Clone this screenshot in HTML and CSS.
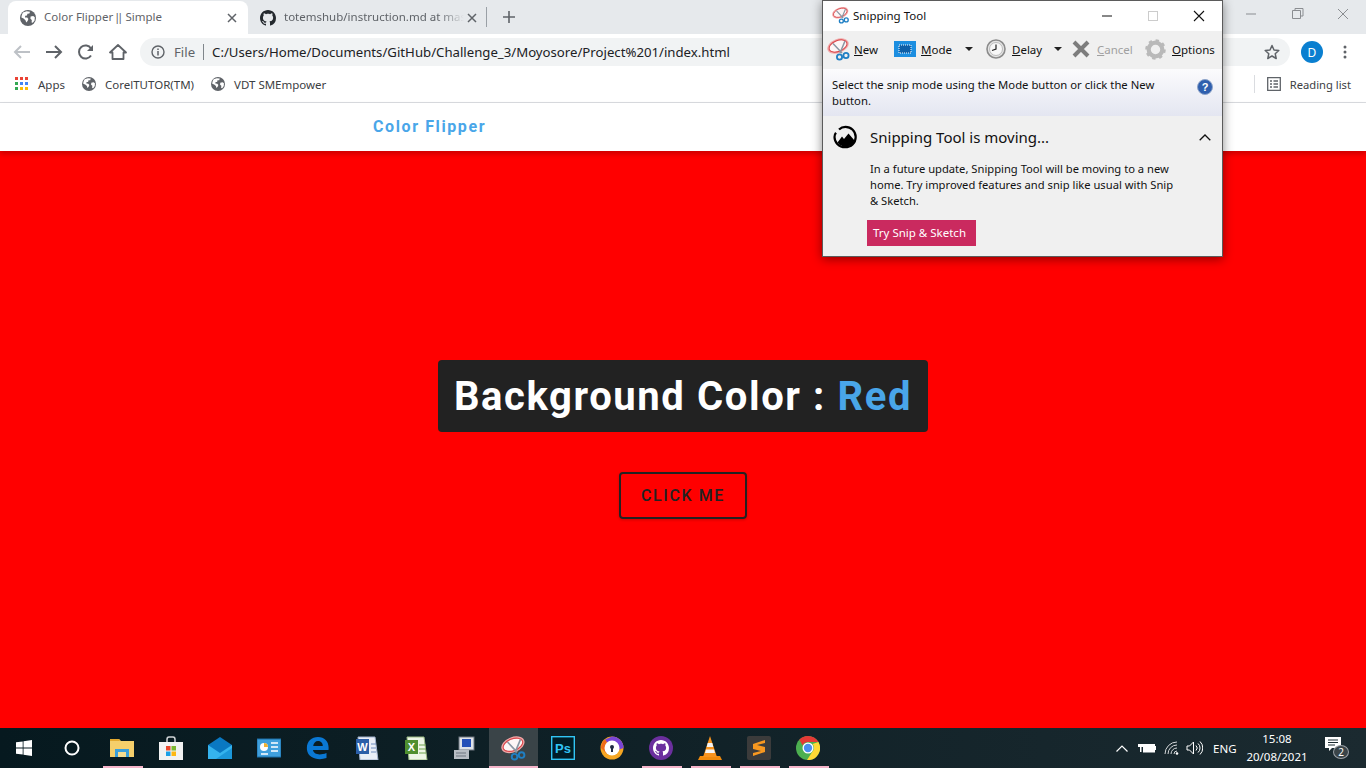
FILE: index.html
```html
<!DOCTYPE html>
<html lang="en">
<head>
  <meta charset="UTF-8" />
  <meta name="viewport" content="width=device-width, initial-scale=1" />
  <title>Color Flipper || Simple</title>
  <link rel="stylesheet" href="styles.css">
</head>
<body>
  <svg class="defs" width="0" height="0">
    <symbol id="globe" viewBox="0 0 16 16">
      <circle cx="8" cy="8" r="8" fill="#5f6368"/>
      <path fill="#fff" d="M3 2.600 6.600 1.300 10 1.800 9.400 3.600 7.400 3.800 7 5.600 5.200 5.800 5 7.400 7.200 7.600 8.400 9 7.600 11 6.200 12.600 5.600 10.400 3.600 8.600 1.400 7.600C1.600 5.600 2.200 3.800 3 2.600ZM10.600 6.600 13.200 6 14.800 7.200 14.600 10.400 12.800 12.800 11.600 12.600 11.800 10 10.400 8.800Z"/>
    </symbol>
    <symbol id="octocat" viewBox="0 0 16 16">
      <path d="M8 0C3.580 0 0 3.580 0 8c0 3.540 2.290 6.530 5.470 7.590.4.070.55-.17.55-.38 0-.19-.01-.82-.01-1.490-2.010.37-2.530-.49-2.690-.94-.09-.23-.48-.94-.82-1.130-.28-.15-.68-.52-.01-.53.63-.01 1.080.58 1.230.82.720 1.210 1.870.87 2.330.66.070-.52.280-.87.510-1.070-1.780-.2-3.640-.89-3.640-3.950 0-.87.310-1.590.82-2.150-.08-.2-.36-1.020.08-2.120 0 0 .67-.21 2.200.82.640-.18 1.320-.27 2-.27.68 0 1.360.09 2 .27 1.530-1.040 2.200-.82 2.200-.82.44 1.100.16 1.920.08 2.120.51.560.82 1.270.82 2.150 0 3.070-1.870 3.750-3.650 3.950.29.250.54.730.54 1.480 0 1.070-.01 1.930-.01 2.200 0 .21.150.46.550.38A8.013 8.013 0 0016 8c0-4.420-3.580-8-8-8z"/>
    </symbol>
    <symbol id="scissors" viewBox="0 0 24 24">
      <ellipse cx="11" cy="9" rx="10.200" ry="6" transform="rotate(-22 11 9)" fill="#fdf6f6" stroke="#f0a9a9" stroke-width="2"/>
      <ellipse cx="11" cy="9" rx="9.500" ry="5.400" transform="rotate(-22 11 9)" fill="none" stroke="#d9474c" stroke-width="1"/>
      <path d="M6 6.500 15 16M18 4 13 16" stroke="#8a96a3" stroke-width="1.500" fill="none"/>
      <circle cx="12.500" cy="20" r="2.600" fill="none" stroke="#1f7fc4" stroke-width="1.800"/>
      <circle cx="19" cy="18.500" r="2.600" fill="none" stroke="#1f7fc4" stroke-width="1.800"/>
    </symbol>
  </svg>

  <header class="browser">
    <div class="tabstrip">
      <div class="tab active">
        <svg class="ico16" aria-hidden="true"><use href="#globe"/></svg>
        <span class="tab-title">Color Flipper <span class="bars">||</span> Simple</span>
        <svg class="tab-x" viewBox="0 0 10 10"><path d="M1 1 9 9M9 1 1 9" stroke="#5f6368" stroke-width="1.500"/></svg>
      </div>
      <div class="tab">
        <svg class="ico16" fill="#24292e" aria-hidden="true"><use href="#octocat"/></svg>
        <span class="tab-title fade">totemshub/instruction.md at mas</span>
        <svg class="tab-x" viewBox="0 0 10 10"><path d="M1 1 9 9M9 1 1 9" stroke="#5f6368" stroke-width="1.500"/></svg>
      </div>
      <span class="tab-sep"></span>
      <svg class="tab-new" viewBox="0 0 12 12"><path d="M6 0V12M0 6H12" stroke="#5f6368" stroke-width="1.600"/></svg>
      <div class="win-controls">
        <svg viewBox="0 0 46 14"><path d="M18 7H28" stroke="#8a8d91"/></svg>
        <svg viewBox="0 0 46 14"><path d="M18.500 3.500H26.500V11.500H18.500ZM21 3.500V1.500H29V9H26.500" stroke="#8a8d91" fill="none"/></svg>
        <svg viewBox="0 0 46 14"><path d="M18 2 28 12M28 2 18 12" stroke="#8a8d91"/></svg>
      </div>
    </div>

    <div class="toolbar">
      <svg class="nav-btn" viewBox="0 0 32 16"><path d="M24 8H9M15 2 9 8 15 14" fill="none" stroke="#bdc1c6" stroke-width="2"/></svg>
      <svg class="nav-btn" viewBox="0 0 32 16"><path d="M8 8H23M17 2 23 8 17 14" fill="none" stroke="#5f6368" stroke-width="2"/></svg>
      <svg class="nav-btn" viewBox="0 0 32 16"><path d="M21 11.500A6.500 6.500 0 1 1 21 4.500" fill="none" stroke="#5f6368" stroke-width="2"/><path d="M23 1V7H17Z" fill="#5f6368"/></svg>
      <svg class="nav-btn" viewBox="0 0 32 16"><path d="M16 1 8 8.500H10.500V15H21.500V8.500H24Z" fill="none" stroke="#5f6368" stroke-width="1.800" stroke-linejoin="round"/></svg>
      <div class="omnibox">
        <svg class="ico14" viewBox="0 0 14 14"><circle cx="7" cy="7" r="6" fill="none" stroke="#5f6368" stroke-width="1.400"/><path d="M7 6V10.500M7 3.500V5" stroke="#5f6368" stroke-width="1.500"/></svg>
        <span class="omni-scheme">File</span>
        <span class="omni-sep"></span>
        <span class="omni-url">C:/Users/Home/Documents/GitHub/Challenge_3/Moyosore/Project%201/index.html</span>
        <svg class="omni-star" viewBox="0 0 16 16"><path d="M8 1.500 10 6 14.800 6.500 11.200 9.700 12.200 14.500 8 12 3.800 14.500 4.800 9.700 1.200 6.500 6 6Z" fill="none" stroke="#5f6368" stroke-width="1.500" stroke-linejoin="round"/></svg>
      </div>
      <span class="avatar">D</span>
      <svg class="kebab" viewBox="0 0 4 14"><circle cx="2" cy="2" r="1.500"/><circle cx="2" cy="7" r="1.500"/><circle cx="2" cy="12" r="1.500"/></svg>
    </div>

    <div class="bookmarks">
      <a class="bookmark">
        <svg class="ico14" viewBox="0 0 14 14">
          <rect width="3" height="3" fill="#ea4335"/><rect x="5" width="3" height="3" fill="#ea4335"/><rect x="10" width="3" height="3" fill="#ea4335"/>
          <rect y="5" width="3" height="3" fill="#34a853"/><rect x="5" y="5" width="3" height="3" fill="#4285f4"/><rect x="10" y="5" width="3" height="3" fill="#4285f4"/>
          <rect y="10" width="3" height="3" fill="#34a853"/><rect x="5" y="10" width="3" height="3" fill="#fbbc05"/><rect x="10" y="10" width="3" height="3" fill="#fbbc05"/>
        </svg>
        Apps
      </a>
      <a class="bookmark"><svg class="ico14" aria-hidden="true"><use href="#globe"/></svg>CorelTUTOR(TM)</a>
      <a class="bookmark"><svg class="ico14" aria-hidden="true"><use href="#globe"/></svg>VDT SMEmpower</a>
      <div class="reading">
        <svg class="ico14" viewBox="0 0 14 14"><path d="M.7.700H13.300V13.300H.7ZM3 4H5M6.500 4H11M3 7H5M6.500 7H11M3 10H5M6.500 10H11" fill="none" stroke="#5f6368" stroke-width="1.300"/></svg>
        Reading list
      </div>
    </div>
  </header>

  <nav class="site-nav">
    <h4>Color Flipper</h4>
  </nav>

  <main class="hero">
    <h2 class="bg-label">Background Color : <span class="color-name">Red</span></h2>
    <button class="btn-flip">Click me</button>
  </main>

  <footer class="taskbar">
    <div class="start">
      <svg viewBox="0 0 16 16" width="16" height="16"><path fill="#fff" d="M0 2.300 6.700 1.400V7.600H0ZM7.500 1.300 16 0V7.600H7.500ZM0 8.400H6.700V14.600L0 13.700ZM7.500 8.400H16V16L7.500 14.700Z"/></svg>
    </div>
    <div class="start cortana">
      <svg viewBox="0 0 16 16" width="16" height="16"><circle cx="8" cy="8" r="6.500" fill="none" stroke="#fff" stroke-width="2"/></svg>
    </div>
    <div class="task-item open">
      <svg viewBox="0 0 24 24"><path d="M0 3H9L11 5H24V21H0Z" fill="#f5cf6b"/><path d="M0 3H9L10 5H0Z" fill="#e3a92f"/><path d="M5 13H19V21H16V16H8V21H5Z" fill="#3a9fdb"/><rect x="8" y="16" width="8" height="5" fill="#f5dc91"/></svg>
    </div>
    <div class="task-item">
      <svg viewBox="0 0 24 24"><path d="M8 7V3.500C8 2 9 1 10 1H14C15 1 16 2 16 3.500V7" fill="none" stroke="#cfd3d6" stroke-width="1.500"/><rect y="6" width="24" height="18" fill="#f2f2f2"/><rect x="7" y="10" width="4.500" height="4.500" fill="#e8462b"/><rect x="12.500" y="10" width="4.500" height="4.500" fill="#7cb82f"/><rect x="7" y="15.500" width="4.500" height="4.500" fill="#1c9fe6"/><rect x="12.500" y="15.500" width="4.500" height="4.500" fill="#fdb813"/></svg>
    </div>
    <div class="task-item">
      <svg viewBox="0 0 24 24"><path d="M0 9 12 1 24 9V23H0Z" fill="#0a78c2"/><path d="M0 9 12 17 24 9V23H0Z" fill="#35b3ee"/><path d="M24 23H8L24 12Z" fill="#1b97da"/></svg>
    </div>
    <div class="task-item">
      <svg viewBox="0 0 24 24"><rect y="3" width="24" height="18" fill="#3f9fdc" stroke="#1b6ea8"/><circle cx="7" cy="11" r="4" fill="#fff"/><path d="M7 11V7A4 4 0 0 1 11 11Z" fill="#f2b233"/><path d="M14 7H21M14 11H21M14 15H21M4 18H11" stroke="#fff" stroke-width="1.500"/></svg>
    </div>
    <div class="task-item">
      <svg viewBox="0 0 24 24"><path d="M22.500 14H7C7.500 18 13 20 20.500 17V22C12 25 2 22 1 14 0 6 5 1 12 1 19 1 23.500 6 22.500 14ZM16.800 10C16.800 6.500 14.500 5 12 5 9.500 5 7.500 7 7.200 10Z" fill="#0a78d4"/></svg>
    </div>
    <div class="task-item">
      <svg viewBox="0 0 24 24"><path d="M3 1H20L23 24H5Z" fill="#e9eef7" stroke="#9fb0cc"/><rect x="1" y="3" width="13" height="15" fill="#2b5ea8"/><text class="office-letter" x="7.500" y="15">W</text><path d="M16 8H21M16 12H21M16 16H21" stroke="#6f8dbf"/></svg>
    </div>
    <div class="task-item">
      <svg viewBox="0 0 24 24"><path d="M3 1H20L23 24H5Z" fill="#edf5e6" stroke="#9dbb84"/><rect x="1" y="4" width="13" height="14" fill="#4f8f2f"/><text class="office-letter" x="7.500" y="15">X</text><path d="M15 9H22M15 13H22M15 17H22" stroke="#6fa34f"/></svg>
    </div>
    <div class="task-item">
      <svg viewBox="0 0 24 24"><rect x="6" y="1" width="15" height="13" fill="#dfe3e8" stroke="#6e7780"/><rect x="9" y="3" width="9" height="8" fill="#2450b8"/><path d="M1 14H16V23H1Z" fill="#b8bec4"/><path d="M3 17H13M3 20H13" stroke="#6e7780"/></svg>
    </div>
    <div class="task-item open current">
      <svg class="snip-big" aria-hidden="true"><use href="#scissors"/></svg>
    </div>
    <div class="task-item">
      <svg viewBox="0 0 24 24"><rect x=".7" y=".7" width="22.600" height="22.600" fill="#001d26" stroke="#31c5f4" stroke-width="1.400"/><text class="ps-letter" x="4" y="17">Ps</text></svg>
    </div>
    <div class="task-item">
      <svg viewBox="0 0 24 24"><circle cx="12" cy="12" r="11.500" fill="#f5a623"/><path d="M12 .5A11.500 11.500 0 0 1 23.500 12L12 16 5 3.500Z" fill="#7a45d6"/><path d="M1 12A11.500 11.500 0 0 1 5 3.500L9 9 7 18Z" fill="#ef6c1a"/><circle cx="12" cy="12" r="7.500" fill="#fff"/><circle cx="12" cy="11" r="2" fill="#1f2a44"/><rect x="11" y="11" width="2" height="5" fill="#1f2a44"/></svg>
    </div>
    <div class="task-item open">
      <svg viewBox="0 0 24 24"><circle cx="12" cy="12" r="12" fill="#6b2f9e"/><svg x="4" y="4" width="16" height="16" fill="#fff"><use href="#octocat"/></svg></svg>
    </div>
    <div class="task-item open">
      <svg viewBox="0 0 24 24"><path d="M2 20H22L24 24H0Z" fill="#f08a0c"/><path d="M12 0 19 21H5Z" fill="#f7931e"/><path d="M9.700 7H14.300L15.300 11H8.700ZM8 13.500H16L17 17H7Z" fill="#f4f4f4"/></svg>
    </div>
    <div class="task-item open">
      <svg viewBox="0 0 24 24"><rect width="24" height="24" rx="2" fill="#3b3b3b"/><path d="M18 4 6 8V13L14 15 6 17V20L18 16V11L10 9 18 7Z" fill="#f89820"/></svg>
    </div>
    <div class="task-item open">
      <svg viewBox="0 0 24 24"><circle cx="12" cy="12" r="12" fill="#4caf50"/><path d="M12 0A12 12 0 0 1 22.400 6H12C9.500 6 7.500 7.500 6.700 9.500L3.300 3.700A12 12 0 0 1 12 0Z" fill="#e53935"/><path d="M22.400 6A12 12 0 0 1 11 24L16.500 15.500A5.500 5.500 0 0 0 16.500 8Z" fill="#fdd835"/><circle cx="12" cy="12" r="5.500" fill="#fff"/><circle cx="12" cy="12" r="4.200" fill="#4a8ef0"/></svg>
    </div>

    <div class="tray">
      <svg class="tray-chevron" viewBox="0 0 12 7"><path d="M.5 6.500 6 1 11.500 6.500" fill="none" stroke="#fff" stroke-width="1.200"/></svg>
      <svg class="tray-battery" viewBox="0 0 18 12"><path d="M1 2V0M4 2V0M0 2H5V5H3.500V10H2V5H0Z" fill="#fff"/><rect x="5.500" y="2.500" width="11" height="7.500" fill="#fff" stroke="#fff"/><rect x="17" y="4" width="1" height="4" fill="#fff"/></svg>
      <svg class="tray-wifi" viewBox="0 0 16 14"><path d="M1 13A12 12 0 0 1 13 1M4 13A9 9 0 0 1 13 4M7 13A6 6 0 0 1 13 7M10 13A3 3 0 0 1 13 10" fill="none" stroke="#d5d8da"/><circle cx="13" cy="12.500" r="1.300" fill="#fff"/></svg>
      <svg class="tray-volume" viewBox="0 0 17 14"><path d="M1 5H3.500L7.500 1V13L3.500 9H1Z" fill="none" stroke="#fff"/><path d="M10 4.500A3.500 3.500 0 0 1 10 9.500M12 2.500A6 6 0 0 1 12 11.500M14 .5A9 9 0 0 1 14 13.500" fill="none" stroke="#fff"/></svg>
      <span class="tray-lang">ENG</span>
      <div class="tray-clock"><span>15:08</span><span>20/08/2021</span></div>
      <div class="tray-notify">
        <svg viewBox="0 0 16 15"><path d="M0 0H16V11H7L4 14V11H0Z" fill="#fff"/><path d="M3 3H13M3 5.500H13M3 8H10" stroke="#1b2a30"/></svg>
        <span class="notify-badge">2</span>
      </div>
    </div>
  </footer>

  <section class="snip-window">
    <div class="snip-title">
      <svg class="ico18" aria-hidden="true"><use href="#scissors"/></svg>
      <span>Snipping Tool</span>
      <div class="snip-controls">
        <svg viewBox="0 0 46 12"><path d="M18 6H28" stroke="#111"/></svg>
        <svg viewBox="0 0 46 12"><rect x="18.500" y="1.500" width="9" height="9" fill="none" stroke="#ccc"/></svg>
        <svg viewBox="0 0 46 12"><path d="M18 1 28 11M28 1 18 11" stroke="#111" stroke-width="1.100"/></svg>
      </div>
    </div>

    <div class="snip-tools">
      <span class="tool tool-new"><svg class="tool-ico-new" aria-hidden="true"><use href="#scissors"/></svg><span><u>N</u>ew</span></span>
      <span class="tool tool-mode">
        <svg class="tool-ico-mode" viewBox="0 0 22 16"><rect width="22" height="16" fill="#1c8ee0"/><rect x="5" y="4" width="12" height="8" fill="#0d5fa8" stroke="#fff" stroke-dasharray="1 1"/></svg>
        <span><u>M</u>ode</span>
      </span>
      <i class="caret"></i>
      <span class="tool tool-delay">
        <svg class="tool-ico-clock" viewBox="0 0 20 20"><circle cx="10" cy="10" r="9" fill="#e4e4e4" stroke="#8b8b8b" stroke-width="1.600"/><circle cx="10" cy="10" r="6.500" fill="#f7f7f7" stroke="#bbb"/><path d="M10 5.500V10L6 11.500" fill="none" stroke="#222" stroke-width="1.200"/></svg>
        <span><u>D</u>elay</span>
      </span>
      <i class="caret"></i>
      <span class="tool tool-cancel">
        <svg class="tool-ico-x" viewBox="0 0 18 18"><path d="M2 2 16 16M16 2 2 16" stroke="#7d7d7d" stroke-width="4"/></svg>
        <span><u>C</u>ancel</span>
      </span>
      <span class="tool tool-options">
        <svg class="tool-ico-gear" viewBox="0 0 20 20"><circle cx="10" cy="10" r="6.500" fill="none" stroke="#b9b9b9" stroke-width="4"/><circle cx="10" cy="10" r="8.300" fill="none" stroke="#b9b9b9" stroke-width="3" stroke-dasharray="3 3.500"/></svg>
        <span><u>O</u>ptions</span>
      </span>
    </div>

    <div class="snip-hint">
      <p>Select the snip mode using the Mode button or click the New button.</p>
      <svg class="help" viewBox="0 0 16 16"><circle cx="8" cy="8" r="7.500" fill="#2f5fae" stroke="#8ea4c9"/><text class="help-mark" x="8" y="12">?</text></svg>
    </div>

    <div class="snip-notice">
      <div class="notice-head">
        <svg class="notice-logo" viewBox="0 0 24 24"><path d="M6 4.500C8 2.500 10 1.800 12.500 1.800A10.200 10.200 0 0 1 22.700 12C22.700 18 18 22.200 12 22.200 6 22.200 1.500 17.500 1.500 12 1.500 10.500 2 9 3 7.800" fill="none" stroke="#000" stroke-width="2.200"/><path d="M4.500 17.500 9 11.500 11 14 15.500 8.500 21.500 15.500C20 19.500 16 21.500 12 21.500 8.500 21.500 6 19.800 4.500 17.500Z" fill="#000"/></svg>
        <span class="notice-title">Snipping Tool is moving...</span>
        <svg class="notice-chevron" viewBox="0 0 12 7"><path d="M.7 6.300 6 1 11.300 6.300" fill="none" stroke="#111" stroke-width="1.300"/></svg>
      </div>
      <p class="notice-body">In a future update, Snipping Tool will be moving to a new home. Try improved features and snip like usual with Snip &amp; Sketch.</p>
      <button class="notice-btn">Try Snip &amp; Sketch</button>
    </div>
  </section>
</body>
</html>
```

FILE: styles.css
```css
* { box-sizing: border-box; }
html, body { height: 100%; }
body {
  margin: 0;
  height: 768px;
  overflow: hidden;
  display: flex;
  flex-direction: column;
  position: relative;
  font-family: "Noto Sans", "Open Sans", sans-serif;
  font-size: 12px;
  color: #202124;
}
.defs { position: absolute; }
.ico14 { width: 14px; height: 14px; flex: none; }
.ico16 { width: 16px; height: 16px; flex: none; }
.ico18 { width: 18px; height: 18px; flex: none; }

/* browser chrome */
.tabstrip {
  height: 34px;
  background: #e6e9ec;
  display: flex;
  align-items: flex-end;
  padding-left: 8px;
}
.tab {
  width: 240px;
  height: 33px;
  display: flex;
  align-items: center;
  gap: 8px;
  padding: 0 11px 0 12px;
  color: #5f6368;
}
.tab.active { background: #fff; border-radius: 8px 8px 0 0; }
.tab-title {
  flex: 1;
  min-width: 0;
  white-space: nowrap;
  overflow: hidden;
  font-size: 11.5px;
  padding-bottom: 2px;
}
.tab-title.fade {
  margin-right: -5px;
  -webkit-mask-image: linear-gradient(90deg, #000 86%, transparent);
  mask-image: linear-gradient(90deg, #000 86%, transparent);
}
.bars { letter-spacing: -3.3px; margin: 0 2.5px 0 -2.3px; }
.tab-x { width: 10px; height: 10px; flex: none; }
.tab-sep { width: 1px; height: 20px; background: #9aa0a6; margin: 0 0 7px -2px; }
.tab-new { width: 12px; height: 12px; margin: 0 0 11px 16px; }
.win-controls { margin-left: auto; display: flex; align-self: flex-start; padding-top: 7px; }
.win-controls svg { width: 46px; height: 14px; display: block; }

.toolbar {
  height: 35px;
  background: #fff;
  display: flex;
  align-items: center;
  padding-left: 6px;
  padding-top: 1px;
}
.nav-btn { width: 32px; height: 16px; flex: none; }
.omnibox {
  width: 1150px;
  height: 28px;
  margin-left: 6px;
  background: #f1f3f4;
  border-radius: 14px;
  display: flex;
  align-items: center;
  padding-left: 11px;
  font-size: 13.2px;
}
.omni-scheme { margin-left: 9px; color: #5f6368; }
.omni-sep { width: 1px; height: 16px; background: #80868b; margin: 0 8px; }
.omni-url { color: #202124; white-space: nowrap; }
.omni-star { width: 16px; height: 16px; margin-left: auto; margin-right: 10px; }
.avatar {
  width: 22px;
  height: 22px;
  margin-left: 11px;
  border-radius: 50%;
  background: #0a7fd0;
  color: #fff;
  display: flex;
  align-items: center;
  justify-content: center;
  font-size: 12px;
}
.kebab { width: 4px; height: 14px; margin-left: 20px; fill: #5f6368; }

.bookmarks {
  height: 34px;
  background: #fff;
  border-bottom: 1px solid #dadce0;
  display: flex;
  align-items: center;
  padding: 0 15px 3px;
  font-size: 11.5px;
  color: #3c4043;
}
.bookmark { display: flex; align-items: center; gap: 9px; margin-right: 17px; }
.reading {
  margin-left: auto;
  height: 18px;
  border-left: 1px solid #dadce0;
  padding-left: 12px;
  display: flex;
  align-items: center;
  gap: 9px;
  font-size: 11.2px;
}

/* the page itself */
.site-nav {
  height: 48px;
  background: #fff;
  box-shadow: 0 3px 5px rgba(0,0,0,0.2);
  position: relative;
  display: flex;
  align-items: center;
  padding: 0 0 2px 373px;
}
.site-nav h4 {
  margin: 0;
  font-family: Roboto, sans-serif;
  font-size: 16px;
  font-weight: 700;
  letter-spacing: 1.6px;
  color: #49a6e9;
}
.hero {
  flex: 1;
  background: #f00;
  display: flex;
  flex-direction: column;
  align-items: center;
  justify-content: center;
  gap: 40px;
}
.bg-label {
  margin: 0;
  height: 72px;
  padding: 0 16px;
  display: flex;
  align-items: center;
  white-space: pre;
  background: #222;
  border-radius: 4px;
  font-family: Roboto, sans-serif;
  font-size: 40px;
  font-weight: 700;
  letter-spacing: 1.6px;
  color: #fff;
}
.color-name { color: #49a6e9; }
.btn-flip {
  width: 128px;
  height: 47px;
  background: transparent;
  border: 2px solid #222;
  border-radius: 4px;
  box-shadow: 0 1px 3px rgba(0,0,0,0.2);
  font-family: Roboto, sans-serif;
  font-size: 16px;
  font-weight: 500;
  letter-spacing: 1.6px;
  text-transform: uppercase;
  color: #222;
}

/* taskbar */
.taskbar {
  height: 40px;
  background: linear-gradient(90deg, #06191f, #1b2a30);
  display: flex;
  align-items: stretch;
  color: #fff;
}
.start { width: 47px; display: flex; align-items: center; justify-content: center; }
.start.cortana { width: 50px; }
.task-item {
  width: 49px;
  display: flex;
  align-items: center;
  justify-content: center;
  position: relative;
}
.task-item > svg { width: 24px; height: 24px; }
.task-item > svg.snip-big { width: 26px; height: 26px; }
.task-item.current { background: #3a4448; }
.task-item.open::after {
  content: "";
  position: absolute;
  left: 6px;
  right: 3px;
  bottom: 0;
  height: 2px;
  background: #f5b5ca;
}
.task-item.current::after { left: 0; right: 0; }
.office-letter { font: 700 11px "Liberation Sans", sans-serif; fill: #fff; text-anchor: middle; }
.ps-letter { font: 700 13px "Liberation Sans", sans-serif; fill: #31c5f4; }

.tray { margin-left: auto; display: flex; align-items: center; }
.tray-chevron { width: 12px; height: 7px; margin-right: 10px; }
.tray-battery { width: 18px; height: 12px; margin-right: 8px; }
.tray-wifi { width: 16px; height: 14px; margin-right: 6px; }
.tray-volume { width: 17px; height: 14px; margin-right: 10px; }
.tray-lang { font-size: 11.5px; width: 26px; margin-right: 4px; }
.tray-clock {
  width: 68px;
  display: flex;
  flex-direction: column;
  align-items: center;
  gap: 4px;
  font-size: 11.5px;
  line-height: 14px;
}
.tray-notify { width: 24px; height: 22px; margin: 0 17px 0 14px; position: relative; }
.tray-notify svg { width: 16px; height: 15px; display: block; }
.notify-badge {
  position: absolute;
  right: 0;
  bottom: 0;
  width: 16px;
  height: 14px;
  border-radius: 50%;
  background: #3a4448;
  border: 1px solid #9aa0a6;
  font-size: 10px;
  line-height: 12px;
  text-align: center;
}

/* snipping tool window */
.snip-window {
  position: absolute;
  left: 822px;
  top: 0;
  width: 401px;
  height: 257px;
  border: 1px solid #5b5b5b;
  background: #f0f0f0;
  box-shadow: 0 2px 10px rgba(0,0,0,0.45);
  display: flex;
  flex-direction: column;
  color: #111;
}
.snip-title {
  height: 30px;
  background: #fff;
  display: flex;
  align-items: center;
  gap: 3px;
  padding: 0 0 2px 9px;
  font-size: 11.5px;
}
.snip-controls { margin-left: auto; display: flex; margin-top: 2px; }
.snip-controls svg { width: 46px; height: 12px; display: block; }
.snip-tools {
  height: 38px;
  display: flex;
  align-items: center;
  padding: 0 0 2px 4px;
  font-size: 11.5px;
}
.tool { display: flex; align-items: center; gap: 3px; }
.tool-new { width: 67px; }
.tool-mode { width: 71px; gap: 5px; }
.tool-delay { width: 68px; margin-left: 13px; gap: 6px; }
.tool-cancel { width: 73px; margin-left: 10px; gap: 7px; color: #a0a0a0; }
.tool-options { gap: 6px; }
.tool-ico-new { width: 24px; height: 24px; flex: none; }
.tool-ico-mode { width: 22px; height: 16px; flex: none; }
.tool-ico-clock { width: 20px; height: 20px; flex: none; }
.tool-ico-x { width: 18px; height: 18px; flex: none; }
.tool-ico-gear { width: 21px; height: 21px; flex: none; }
.caret {
  width: 0;
  height: 0;
  border-left: 4px solid transparent;
  border-right: 4px solid transparent;
  border-top: 4px solid #222;
  flex: none;
}
.snip-hint {
  height: 47px;
  background: linear-gradient(#fbfbfd, #e4e6f1);
  display: flex;
  padding: 8px 9px 0 9px;
  gap: 25px;
}
.snip-hint p { margin: 0; width: 340px; font-size: 11.3px; line-height: 16px; }
.help { width: 16px; height: 16px; flex: none; margin-top: 2px; }
.help-mark { font: 700 11px "Liberation Sans", sans-serif; fill: #fff; text-anchor: middle; }
.snip-notice { flex: 1; padding: 9px 11px 0 10px; }
.notice-head { display: flex; align-items: center; height: 24px; }
.notice-logo { width: 24px; height: 24px; flex: none; }
.notice-title { margin-left: 13px; font-size: 15px; }
.notice-chevron { width: 12px; height: 7px; margin-left: auto; }
.notice-body {
  margin: 12px 0 0 37px;
  width: 310px;
  font-size: 11.2px;
  line-height: 16px;
}
.notice-btn {
  display: block;
  margin: 11px 0 0 34px;
  width: 109px;
  height: 26px;
  border: 0;
  padding: 0 4px 2px 0;
  background: #ca2a5f;
  color: #fff;
  font-family: inherit;
  font-size: 11.5px;
}
```
